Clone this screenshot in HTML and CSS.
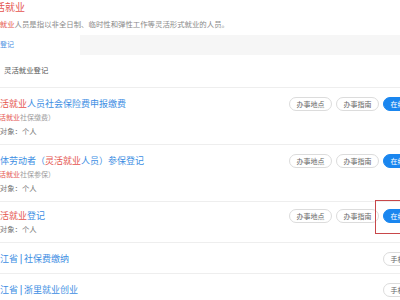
FILE: index.html
```html
<!DOCTYPE html>
<html lang="zh-CN">
<head>
<meta charset="utf-8">
<title>灵活就业</title>
<link rel="stylesheet" href="styles.css">
</head>
<body>
<div class="page">
  <section class="intro">
    <h1 class="intro-title">灵活就业</h1>
    <p class="intro-desc"><span class="hl">灵活就业</span>人员是指以非全日制、临时性和弹性工作等灵活形式就业的人员。</p>
  </section>
  <nav class="tabs">
    <span class="tab active">灵活就业登记</span>
    <span class="tab-rest"></span>
  </nav>
  <div class="subnav">灵活就业登记</div>
  <ul class="list">
    <li class="row">
      <div class="info">
        <div class="title"><span class="hl">灵活就业</span>人员社会保险费申报缴费</div>
        <div class="meta"><span class="sub">（<span class="hl">灵活就业</span>社保缴费）</span></div>
        <div class="meta">服务对象：个人</div>
      </div>
      <div class="actions">
        <span class="btn">办事地点</span>
        <span class="btn">办事指南</span>
        <span class="btn primary">在线办理</span>
      </div>
    </li>
    <li class="row">
      <div class="info">
        <div class="title">个体劳动者（<span class="hl">灵活就业</span>人员）参保登记</div>
        <div class="meta"><span class="sub">（<span class="hl">灵活就业</span>社保参保）</span></div>
        <div class="meta">服务对象：个人</div>
      </div>
      <div class="actions">
        <span class="btn">办事地点</span>
        <span class="btn">办事指南</span>
        <span class="btn primary">在线办理</span>
      </div>
    </li>
    <li class="row compact">
      <div class="info">
        <div class="title"><span class="hl">灵活就业</span>登记</div>
        <div class="meta">服务对象：个人</div>
      </div>
      <div class="actions">
        <span class="btn">办事地点</span>
        <span class="btn">办事指南</span>
        <span class="marked"><span class="btn primary">在线办理</span><span class="mark"></span></span>
      </div>
    </li>
    <li class="row single">
      <div class="info">
        <div class="title">浙江省<span class="sep">|</span>社保费缴纳</div>
      </div>
      <div class="actions">
        <span class="btn">手机办理</span>
      </div>
    </li>
    <li class="row single">
      <div class="info">
        <div class="title">浙江省<span class="sep">|</span>浙里就业创业</div>
      </div>
      <div class="actions">
        <span class="btn">手机办理</span>
      </div>
    </li>
  </ul>
</div>
</body>
</html>
```

FILE: styles.css
```css
html, body {
  margin: 0;
  padding: 0;
}
body {
  width: 400px;
  height: 300px;
  overflow: hidden;
  background: #ffffff;
  font-family: "Noto Sans CJK SC", "Noto Sans", sans-serif;
  color: #666;
}
.page {
  margin-left: -15px;
  width: 441px;
}
.hl {
  color: #e5554f;
}
.intro-title {
  margin: 0;
  font-size: 10px;
  line-height: 13px;
  font-weight: normal;
  color: #e5554f;
}
.intro-desc {
  margin: 4px 0 0;
  font-size: 7.4px;
  line-height: 13px;
  color: #8a8a8a;
}
.tabs {
  display: flex;
  margin-top: 5px;
  height: 20px;
  background: #f6f6f6;
}
.tab {
  font-size: 7px;
  line-height: 18px;
  padding-bottom: 2px;
  color: #4a90e2;
}
.tab.active {
  background: #ffffff;
  width: 95px;
  text-indent: -13px;
  white-space: nowrap;
  overflow: visible;
}
.tab-rest {
  flex: 1;
}
.subnav {
  margin-top: 8px;
  padding: 0 0 11px 19px;
  font-size: 7.4px;
  line-height: 13px;
  color: #555;
}
.list {
  list-style: none;
  margin: 0;
  padding: 0;
  border-top: 1px solid #eeeeee;
}
.row {
  display: flex;
  justify-content: space-between;
  align-items: flex-start;
  padding: 9px 0 7px;
  border-bottom: 1px solid #eeeeee;
}
.row.compact {
  padding: 7px 0 7px;
}
.row.single {
  padding: 9px 0 7px;
}
.title {
  margin-left: 6px;
  font-size: 9px;
  line-height: 13px;
  color: #3d8ee3;
  white-space: nowrap;
}
.sep {
  display: inline-block;
  width: 6px;
  text-align: center;
  font-weight: bold;
  color: #3d8ee3;
}
.meta {
  font-size: 7.4px;
  line-height: 13px;
  color: #777;
  white-space: nowrap;
}
.sub {
  font-size: 7px;
  color: #9a9a9a;
}
.actions {
  display: flex;
  gap: 4px;
}
.btn {
  display: block;
  box-sizing: border-box;
  width: 43px;
  height: 14px;
  border: 1px solid #dcdcdc;
  border-radius: 7px;
  font-size: 7px;
  line-height: 12px;
  text-align: center;
  color: #666;
  background: #fff;
  white-space: nowrap;
}
.btn.primary {
  background: #1a86ef;
  border-color: #1a86ef;
  color: #ffffff;
}
.marked {
  position: relative;
  display: block;
}
.mark {
  position: absolute;
  top: -9px;
  left: -8px;
  right: -8px;
  bottom: -11px;
  border: 1.5px solid #c8474a;
}
```
